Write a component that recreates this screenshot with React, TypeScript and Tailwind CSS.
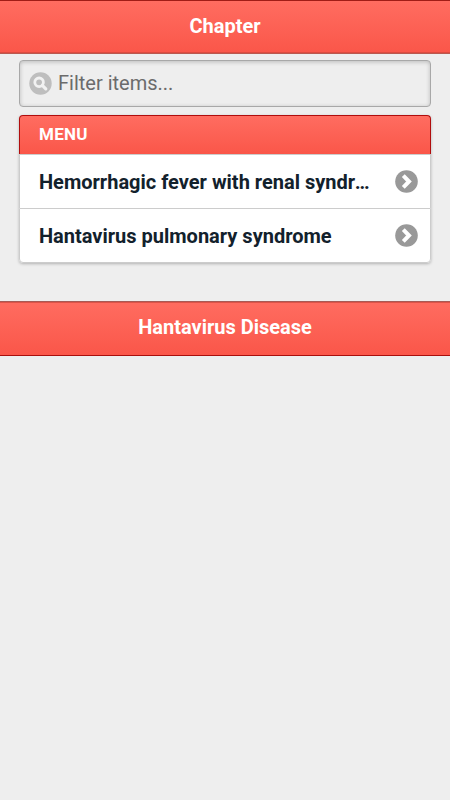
import { ReactNode } from 'react';

const chapters = [
  { id: 1, title: 'Hemorrhagic fever with renal syndrome' },
  { id: 2, title: 'Hantavirus pulmonary syndrome' },
];

function Bar({ children, className }: { children: ReactNode; className: string }) {
  return (
    <div
      className={`flex justify-center border-y bg-gradient-to-b from-[#ff6c60] to-[#fa5649] ${className}`}
    >
      <h1 className="text-[20px] leading-[50px] font-bold text-white">{children}</h1>
    </div>
  );
}

function ArrowIcon() {
  return (
    <svg className="h-[23px] w-[23px] shrink-0" viewBox="0 0 23 23">
      <circle cx="11.5" cy="11.5" r="11.3" fill="#999" />
      <path d="M8.3 5.7l5.7 5.8-5.7 5.8" fill="none" stroke="#fff" strokeWidth="4" />
    </svg>
  );
}

function SearchIcon() {
  return (
    <svg className="h-[23px] w-[23px] shrink-0" viewBox="0 0 23 23">
      <circle cx="11.5" cy="11.5" r="11.2" fill="#bebebe" />
      <circle cx="10.1" cy="10.3" r="4.3" fill="none" stroke="#f2f2f2" strokeWidth="2.8" />
      <path d="M13.3 13.3l3.5 3.5" stroke="#f2f2f2" strokeWidth="3.2" strokeLinecap="round" />
    </svg>
  );
}

export default function App() {
  return (
    <div className="min-h-screen overflow-hidden bg-[#eee] font-['Roboto',sans-serif]">
      <Bar className="h-[54px] border-t-[#a01c16] border-b-[#b9594f] shadow-[inset_0_-1px_0_#dd4b40]">Chapter</Bar>

      <div className="px-[19px] pt-[6px]">
        {/* Filter */}
        <div className="flex h-[47px] items-center gap-[6.5px] rounded-[4px] border border-[#a8a8a8] bg-[#eee] pl-[8.5px] shadow-[inset_0_1px_4px_rgba(0,0,0,0.22)]">
          <SearchIcon />
          <input
            className="w-full bg-transparent pb-[2px] text-[20px] text-[#333] outline-none placeholder:text-[#6b6b6b]"
            placeholder="Filter items..."
          />
        </div>

        {/* Menu */}
        <ul className="mt-2 rounded-[4px] shadow-[0_1px_3px_rgba(0,0,0,0.25)]">
          <li className="flex h-[39px] items-center rounded-t-[4px] border border-b-0 border-[#b00d0d] bg-gradient-to-b from-[#ff6c60] to-[#fa5649] px-[19px] pb-[1px] text-[17px] tracking-[0.25px] font-bold text-white">
            MENU
          </li>
          {chapters.map((chapter) => (
            <li
              key={chapter.id}
              className="flex h-[54px] items-center justify-between border border-b-0 border-[#ccc] bg-white pr-[12px] pl-[19px] last:h-[55px] last:rounded-b-[4px] last:border-b"
            >
              <span className="w-[332px] truncate text-[20px] font-bold text-[#12212c]">{chapter.title}</span>
              <ArrowIcon />
            </li>
          ))}
        </ul>
      </div>

      <Bar className="mt-[38px] h-[55px] border-t-[#a85a55] border-b-[#a80f0c] shadow-[inset_0_1px_0_#dc5348]">
        Hantavirus Disease
      </Bar>
    </div>
  );
}
